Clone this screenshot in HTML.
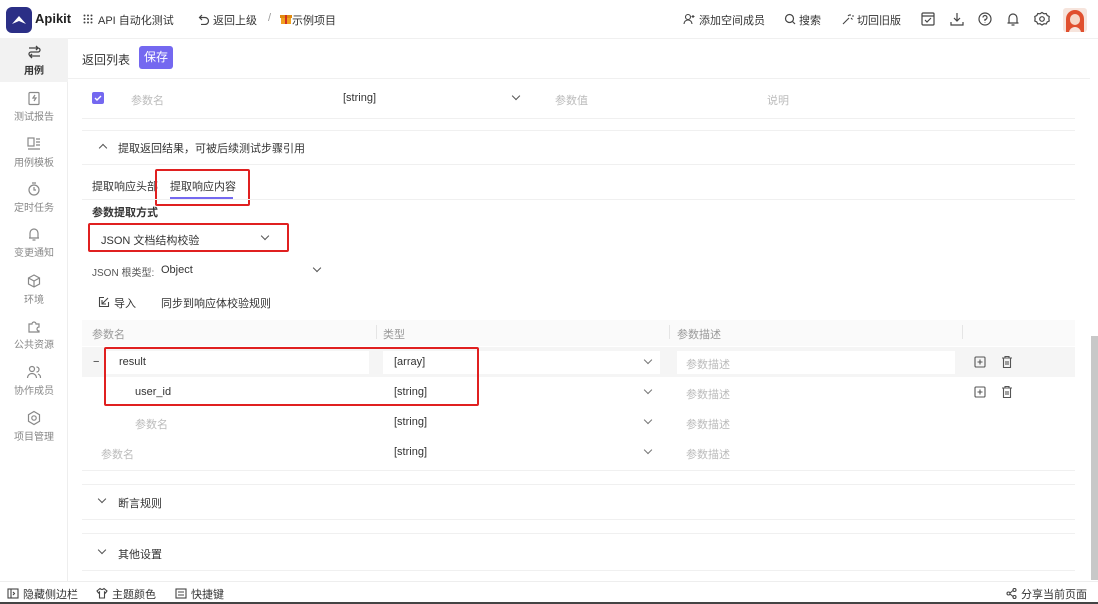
<!DOCTYPE html>
<html><head><meta charset="utf-8"><style>
*{box-sizing:border-box;margin:0;padding:0}
body{width:1098px;height:604px;overflow:hidden;background:#fff;font-family:"Liberation Sans","Noto Sans CJK SC",sans-serif;font-size:11px;color:#333;position:relative}
.a{position:absolute;white-space:nowrap}
.g{color:#bbb}
.sb{position:absolute;left:0;top:38px;width:68px;height:544px;background:#fff;border-right:1px solid #eee}
.si{position:absolute;left:0;width:68px;text-align:center;font-size:10px;color:#888}
.si svg{display:block;margin:0 auto 2px}
.line{position:absolute;left:82px;width:993px;height:1px;background:#f0f0f0}
.red{position:absolute;border:2px solid #e02020;border-radius:2px}
.chev{position:absolute;width:6px;height:6px;border-right:1.3px solid #555;border-bottom:1.3px solid #555;transform:rotate(45deg)}
.chevu{position:absolute;width:6px;height:6px;border-left:1.3px solid #555;border-top:1.3px solid #555;transform:rotate(45deg)}
.ic{position:absolute}
</style></head><body>
<!-- top bar -->
<div class="a" style="left:6px;top:7px;width:26px;height:26px;background:#2b2f86;border-radius:6px"><svg width="26" height="26"><path d="M6 17 L13 9 L20 17 L13 14 Z" fill="#fff"/></svg></div>
<div class="a" style="left:35px;top:11px;font-size:13px;font-weight:bold;color:#222">Apikit</div>
<svg class="ic" style="left:83px;top:14px" width="10" height="10" fill="#444"><circle cx="1.5" cy="1.5" r="1"/><circle cx="5" cy="1.5" r="1"/><circle cx="8.5" cy="1.5" r="1"/><circle cx="1.5" cy="5" r="1"/><circle cx="5" cy="5" r="1"/><circle cx="8.5" cy="5" r="1"/><circle cx="1.5" cy="8.5" r="1"/><circle cx="5" cy="8.5" r="1"/><circle cx="8.5" cy="8.5" r="1"/></svg>
<div class="a" style="left:98px;top:12px">API 自动化测试</div>
<svg class="ic" style="left:198px;top:13px" width="12" height="12" fill="none" stroke="#444" stroke-width="1.2"><path d="M4 2L1.5 4.5 4 7M1.5 4.5H7a3.5 3.5 0 0 1 0 7H3"/></svg>
<div class="a" style="left:213px;top:12px">返回上级</div>
<div class="a" style="left:268px;top:12px;color:#999">/</div>
<svg class="ic" style="left:280px;top:12px" width="12" height="13"><rect x="1" y="4" width="10" height="8" fill="#f0a020"/><rect x="0" y="3" width="12" height="3" fill="#e08a10"/><rect x="5" y="3" width="2" height="9" fill="#d03020"/></svg>
<div class="a" style="left:292px;top:12px">示例项目</div>
<svg class="ic" style="left:683px;top:13px" width="12" height="12" fill="none" stroke="#444" stroke-width="1.1"><circle cx="5" cy="4" r="2.5"/><path d="M1 11a4 4 0 0 1 8 0M10 2v3M8.5 3.5h3"/></svg>
<div class="a" style="left:699px;top:12px">添加空间成员</div>
<svg class="ic" style="left:784px;top:13px" width="12" height="12" fill="none" stroke="#444" stroke-width="1.2"><circle cx="5.5" cy="5.5" r="4"/><path d="M8.5 8.5l2.5 2.5"/></svg>
<div class="a" style="left:799px;top:12px">搜索</div>
<svg class="ic" style="left:842px;top:13px" width="12" height="12" fill="none" stroke="#444" stroke-width="1.1"><path d="M1 11l6-6M8 1v2M10 3h2M9 5l1.5 1.5M6 2l1 1"/></svg>
<div class="a" style="left:857px;top:12px">切回旧版</div>
<svg class="a" style="left:920px;top:11px" width="130" height="16" fill="none" stroke="#444" stroke-width="1.2">
<rect x="2" y="2" width="12" height="12" rx="1"/><path d="M2 5h12M5 9l2 2 4-4"/>
<path d="M37 2v8M34 7l3 3 3-3M31 11v3h12v-3"/>
<circle cx="65" cy="8" r="6"/><path d="M63 6.5a2 2 0 1 1 2 2v1.5M65 11.5v.5"/>
<path d="M89 12V7a4 4 0 0 1 8 0v5h1.5H87.5M91.5 14h3"/>
<circle cx="122" cy="8" r="2.3"/><path d="M122 1.5l2 1.3 2.2-.3 1 2 2 1-.3 2.3.3 2.2-2 1-1 2-2.2-.3-2 1.3-2-1.3-2.2.3-1-2-2-1 .3-2.2-.3-2.3 2-1 1-2 2.2.3z"/>
</svg>
<div class="a" style="left:1063px;top:8px;width:24px;height:24px;background:#f6e4dc;border-radius:3px;overflow:hidden"><div style="position:absolute;left:3px;top:2px;width:18px;height:24px;background:#e0502e;border-radius:9px 9px 2px 2px"></div><div style="position:absolute;left:7px;top:6px;width:10px;height:11px;background:#f6d9c9;border-radius:5px"></div><div style="position:absolute;left:6px;top:19px;width:12px;height:6px;background:#f6e4dc;border-radius:6px 6px 0 0"></div></div>
<div class="a" style="left:0;top:38px;width:1098px;height:1px;background:#f0f0f0"></div>
<!-- sidebar -->
<div class="sb">
<div style="position:absolute;left:0;top:0;width:68px;height:44px;background:#f2f2f2"></div>
<div class="si" style="top:6px;color:#333;font-weight:bold"><svg width="16" height="16" fill="none" stroke="#444" stroke-width="1.3"><path d="M3 4h9a2 2 0 0 1 0 4H5a2 2 0 0 0 0 4h9M10 2l2 2-2 2M6 10l-2 2 2 2"/></svg>用例</div>
<div class="si" style="top:52px"><svg width="16" height="16" fill="none" stroke="#888" stroke-width="1.2"><rect x="3" y="2.5" width="10" height="12" rx="1"/><path d="M9 5l-2 3h3l-2 3"/></svg>测试报告</div>
<div class="si" style="top:98px"><svg width="16" height="16" fill="none" stroke="#888" stroke-width="1.2"><rect x="2" y="2" width="6" height="8"/><path d="M10 3h4M10 6h4M10 9h4M2 13h12"/></svg>用例模板</div>
<div class="si" style="top:143px"><svg width="16" height="16" fill="none" stroke="#888" stroke-width="1.2"><circle cx="8" cy="9" r="5"/><path d="M8 6v3h2M6 2h4"/></svg>定时任务</div>
<div class="si" style="top:188px"><svg width="16" height="16" fill="none" stroke="#888" stroke-width="1.2"><path d="M4 12V7a4 4 0 0 1 8 0v5h1H3M6.5 14h3"/></svg>变更通知</div>
<div class="si" style="top:235px"><svg width="16" height="16" fill="none" stroke="#888" stroke-width="1.2"><path d="M8 2l5.5 3v6L8 14l-5.5-3V5zM8 8v6M8 8l5.5-3M8 8L2.5 5"/></svg>环境</div>
<div class="si" style="top:280px"><svg width="16" height="16" fill="none" stroke="#888" stroke-width="1.2"><path d="M3 6h3a2 2 0 1 1 4 0h3v3a2 2 0 1 0 0 4v1H3z"/></svg>公共资源</div>
<div class="si" style="top:326px"><svg width="16" height="16" fill="none" stroke="#888" stroke-width="1.2"><circle cx="6" cy="5" r="2.5"/><path d="M1.5 14a4.5 4.5 0 0 1 9 0M10.5 3a2.5 2.5 0 0 1 0 5M12 10a4 4 0 0 1 2.5 4"/></svg>协作成员</div>
<div class="si" style="top:372px"><svg width="16" height="16" fill="none" stroke="#888" stroke-width="1.2"><circle cx="8" cy="8" r="2.2"/><path d="M8 1.5l5.5 3.2v6.6L8 14.5l-5.5-3.2V4.7z"/></svg>项目管理</div>
</div>
<!-- toolbar -->
<div class="a" style="left:82px;top:51px;font-size:12px">返回列表</div>
<div class="a" style="left:139px;top:46px;width:34px;height:23px;background:#7468f0;color:#fff;border-radius:3px;text-align:center;line-height:23px;font-size:12px">保存</div>
<div class="a" style="left:68px;top:78px;width:1022px;height:1px;background:#f0f0f0"></div>
<!-- checkbox row -->
<div class="a" style="left:92px;top:92px;width:12px;height:12px;background:#7468f0;border-radius:2px"><svg width="12" height="12"><path d="M3 6l2 2 4-4" stroke="#fff" stroke-width="1.4" fill="none"/></svg></div>
<div class="a g" style="left:131px;top:92px">参数名</div>
<div class="a" style="left:343px;top:92px">[string]</div>
<div class="chev" style="left:513px;top:93px"></div>
<div class="a g" style="left:555px;top:92px">参数值</div>
<div class="a g" style="left:767px;top:92px">说明</div>
<div class="line" style="top:118px"></div>
<div class="line" style="top:130px"></div>
<!-- section -->
<div class="chevu" style="left:100px;top:145px"></div>
<div class="a" style="left:118px;top:140px">提取返回结果，可被后续测试步骤引用</div>
<div class="line" style="top:164px"></div>
<div class="a" style="left:92px;top:178px">提取响应头部</div>
<div class="a" style="left:170px;top:178px">提取响应内容</div>
<div class="a" style="left:170px;top:197px;width:63px;height:2px;background:#7468f0"></div>
<div class="red" style="left:155px;top:169px;width:95px;height:37px"></div>
<div class="line" style="top:199px"></div>
<div class="a" style="left:92px;top:204px;font-weight:bold">参数提取方式</div>
<div class="a" style="left:101px;top:232px">JSON 文档结构校验</div>
<div class="chev" style="left:262px;top:233px"></div>
<div class="red" style="left:88px;top:223px;width:201px;height:29px"></div>
<div class="a" style="left:92px;top:264px;font-size:10px;color:#555">JSON 根类型:</div>
<div class="a" style="left:161px;top:264px">Object</div>
<div class="chev" style="left:314px;top:265px"></div>
<svg class="ic" style="left:98px;top:296px" width="12" height="12" fill="none" stroke="#444" stroke-width="1.1"><path d="M6 1.5H1.5v9h9V6M4 4v4h4M4 8l6-6"/></svg>
<div class="a" style="left:114px;top:295px">导入</div>
<div class="a" style="left:161px;top:295px">同步到响应体校验规则</div>
<!-- table -->
<div class="a" style="left:82px;top:320px;width:993px;height:26px;background:#fafafa"></div>
<div class="a g" style="left:92px;top:326px;color:#999">参数名</div>
<div class="a" style="left:376px;top:325px;width:1px;height:14px;background:#e5e5e5"></div>
<div class="a" style="left:383px;top:326px;color:#999">类型</div>
<div class="a" style="left:669px;top:325px;width:1px;height:14px;background:#e5e5e5"></div>
<div class="a" style="left:677px;top:326px;color:#999">参数描述</div>
<div class="a" style="left:962px;top:325px;width:1px;height:14px;background:#e5e5e5"></div>
<div class="a" style="left:82px;top:347px;width:993px;height:30px;background:#f5f5f5"></div>
<div class="a" style="left:93px;top:356px">−</div>
<div class="a" style="left:105px;top:351px;width:264px;height:23px;background:#fff"></div>
<div class="a" style="left:383px;top:351px;width:277px;height:23px;background:#fff"></div>
<div class="a" style="left:677px;top:351px;width:278px;height:23px;background:#fff"></div>
<div class="a" style="left:119px;top:356px">result</div>
<div class="a" style="left:394px;top:356px">[array]</div>
<div class="a g" style="left:686px;top:356px">参数描述</div>
<div class="a" style="left:135px;top:386px">user_id</div>
<div class="a" style="left:394px;top:386px">[string]</div>
<div class="a g" style="left:686px;top:386px">参数描述</div>
<div class="a g" style="left:135px;top:416px">参数名</div>
<div class="a" style="left:394px;top:416px">[string]</div>
<div class="a g" style="left:686px;top:416px">参数描述</div>
<div class="a g" style="left:101px;top:446px">参数名</div>
<div class="a" style="left:394px;top:446px">[string]</div>
<div class="a g" style="left:686px;top:446px">参数描述</div>
<div class="chev" style="left:645px;top:357px;border-color:#777"></div>
<div class="chev" style="left:645px;top:387px;border-color:#777"></div>
<div class="chev" style="left:645px;top:417px;border-color:#777"></div>
<div class="chev" style="left:645px;top:447px;border-color:#777"></div>
<svg class="a" style="left:973px;top:355px" width="45" height="45" fill="none" stroke="#555" stroke-width="1.1">
<rect x="2" y="2" width="10" height="10" rx="1"/><path d="M7 4.5v5M4.5 7h5"/>
<path d="M29 3h10M32 3V1.5h4V3M30.5 3v9.5h7V3M33 6v4M35 6v4"/>
<g transform="translate(0,30)"><rect x="2" y="2" width="10" height="10" rx="1"/><path d="M7 4.5v5M4.5 7h5"/>
<path d="M29 3h10M32 3V1.5h4V3M30.5 3v9.5h7V3M33 6v4M35 6v4"/></g>
</svg>
<div class="red" style="left:104px;top:347px;width:375px;height:59px"></div>
<div class="line" style="top:470px"></div>
<div class="line" style="top:484px"></div>
<div class="chev" style="left:99px;top:496px"></div>
<div class="a" style="left:118px;top:495px">断言规则</div>
<div class="line" style="top:519px"></div>
<div class="line" style="top:533px"></div>
<div class="chev" style="left:99px;top:547px"></div>
<div class="a" style="left:118px;top:546px">其他设置</div>
<div class="line" style="top:570px"></div>
<!-- scrollbar -->
<div class="a" style="left:1091px;top:336px;width:7px;height:244px;background:#c8c8c8"></div>
<!-- footer -->
<div class="a" style="left:0;top:581px;width:1098px;height:1px;background:#eee"></div>
<svg class="ic" style="left:7px;top:588px" width="12" height="11" fill="none" stroke="#444" stroke-width="1.1"><rect x="1" y="1" width="10" height="9"/><path d="M4 1v9M6 4l1.5 1.5L6 7"/></svg>
<div class="a" style="left:23px;top:586px">隐藏侧边栏</div>
<svg class="ic" style="left:96px;top:587px" width="12" height="12" fill="none" stroke="#444" stroke-width="1.1"><path d="M4 1.5L1 4l1.5 2L3.5 5v6h5V5l1 1L11 4 8 1.5Q6 3.5 4 1.5z"/></svg>
<div class="a" style="left:112px;top:586px">主题颜色</div>
<svg class="ic" style="left:175px;top:588px" width="12" height="11" fill="none" stroke="#444" stroke-width="1.1"><rect x="1" y="1" width="10" height="9"/><path d="M3 4h6M3 7h6"/></svg>
<div class="a" style="left:191px;top:586px">快捷键</div>
<svg class="ic" style="left:1006px;top:588px" width="11" height="11" fill="none" stroke="#444" stroke-width="1.1"><circle cx="2.5" cy="5.5" r="1.5"/><circle cx="8.5" cy="2" r="1.5"/><circle cx="8.5" cy="9" r="1.5"/><path d="M4 5l3-2.5M4 6l3 2.5"/></svg>
<div class="a" style="left:1021px;top:586px">分享当前页面</div>
<div class="a" style="left:0;top:602px;width:1098px;height:2px;background:#444"></div>
</body></html>
